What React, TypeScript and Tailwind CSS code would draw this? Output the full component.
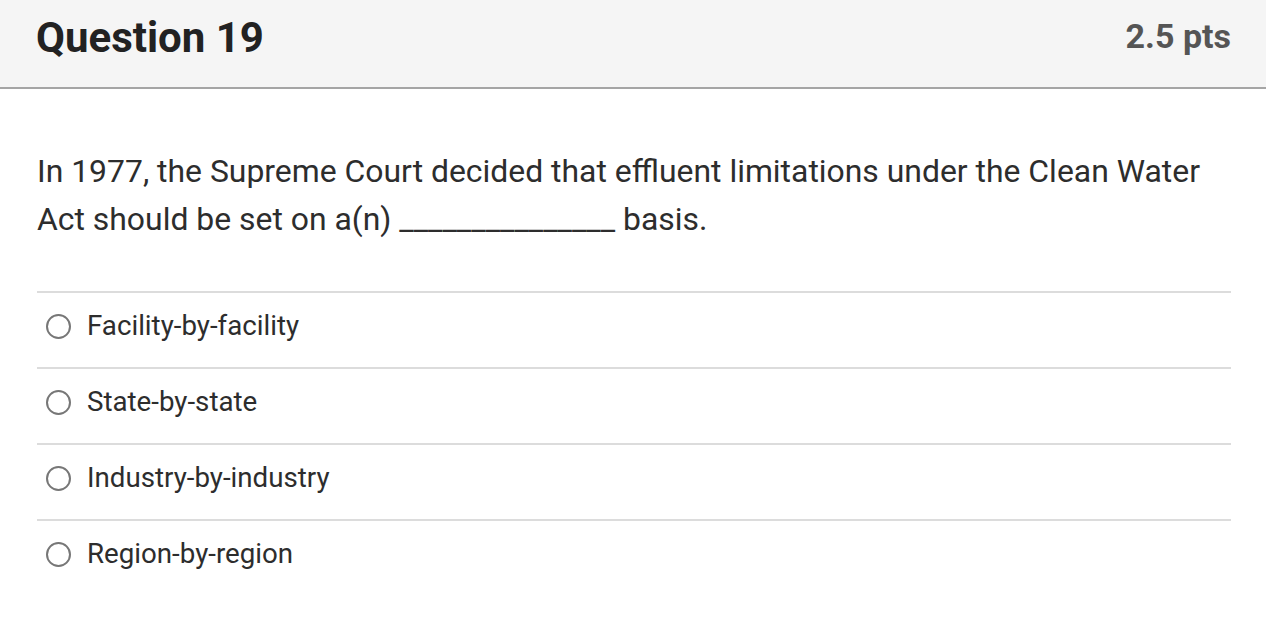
import React from "react";

const options = [
  "Facility-by-facility",
  "State-by-state",
  "Industry-by-industry",
  "Region-by-region",
];

export default function App() {
  return (
    <div className="w-[1266px] h-[634px] bg-white overflow-hidden" style={{ fontFamily: "Roboto, 'Liberation Sans', sans-serif" }}>
      <div className="h-[89px] bg-[#f5f5f5] border-b-2 border-[#a5a5a5] flex items-start justify-between pl-[36px] pr-[35px] pt-[12px]">
        <h2 className="text-[42px] font-bold text-[#222] leading-[52px]">Question 19</h2>
        <div className="text-[34px] font-bold text-[#555] leading-[48px]">2.5 pts</div>
      </div>
      <div className="pl-[37px] pr-[35px]">
        <p className="text-[31.9px] leading-[48px] text-[#2d2d2d] pt-[58px] pb-[48px]">
          In 1977, the Supreme Court decided that effluent limitations under the Clean Water Act should be set on a(n) _______________ basis.
        </p>
        <div>
          {options.map((o) => (
            <div key={o} className="h-[76px] flex items-center pb-[8px] border-t-2 border-[#dcdcdc]">
              <span className="ml-[9px] w-[25px] h-[25px] rounded-full border-2 border-[#777] bg-white shrink-0" />
              <span className="ml-[16px] text-[27.7px] text-[#2d2d2d] leading-[32px]">{o}</span>
            </div>
          ))}
        </div>
      </div>
    </div>
  );
}
